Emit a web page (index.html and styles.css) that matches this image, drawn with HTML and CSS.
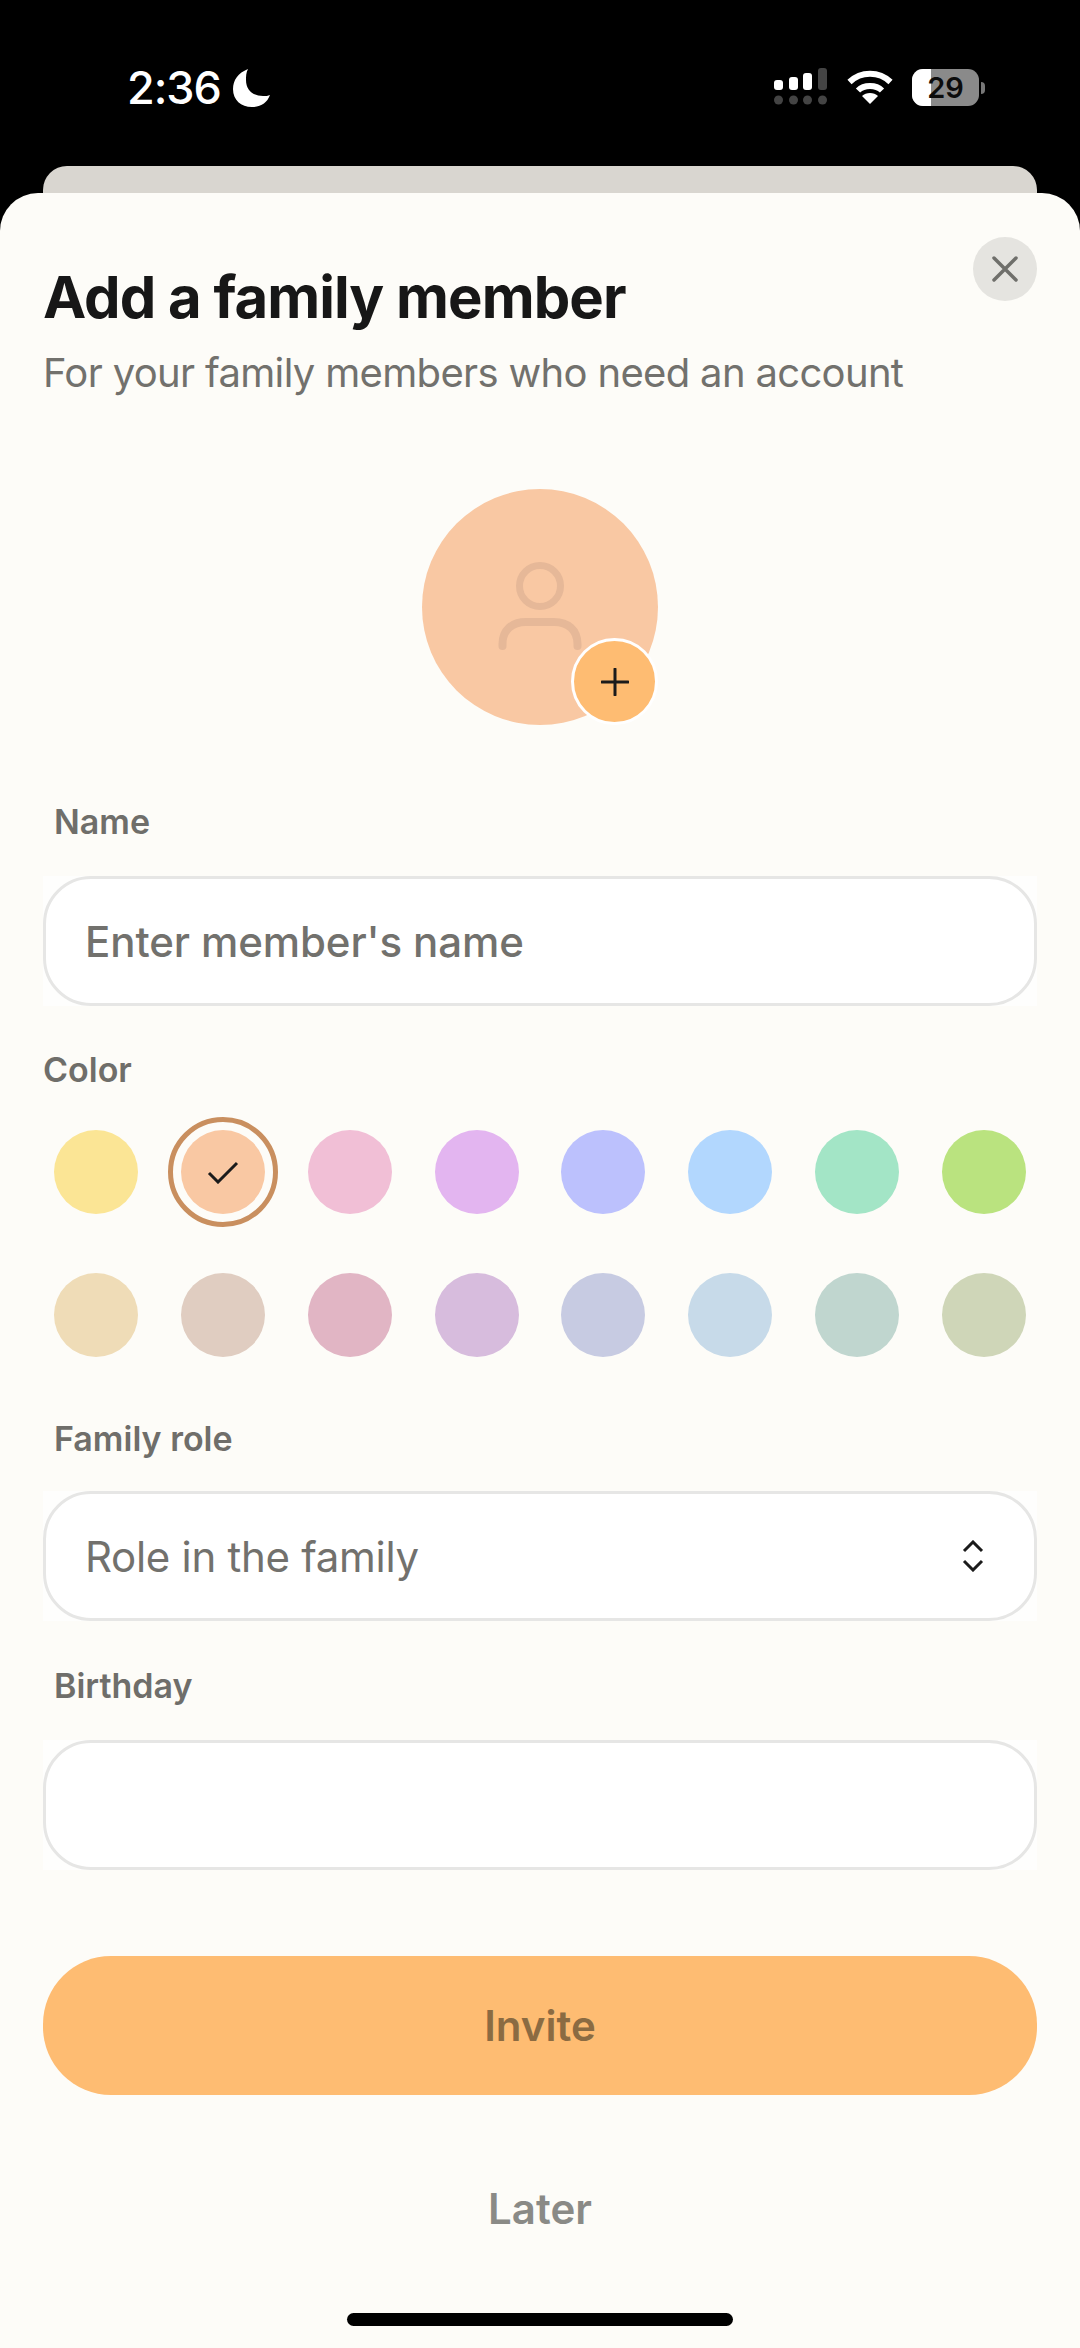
FILE: index.html
```html
<!DOCTYPE html>
<html lang="en">
<head>
    <meta charset="UTF-8">
    <title>Add a family member</title>
    <link rel="stylesheet" href="styles.css">
</head>

<body>
<div class="status-bar">
    <div class="status-left">
        <span class="time">2:36</span>
        <svg class="moon" width="38" height="40" viewBox="0 0 38 40">
            <path d="M15 1 C5 5 0 12 0 21 C0 32 8 39 19 39 C28 39 34 35 37 27 C35 28 33 28 30 28 C20 28 13 22 13 12 C13 8 13 5 15 1 Z" fill="#fff"/>
        </svg>
    </div>
    <div class="status-right">
        <svg class="signal" width="54" height="39" viewBox="0 0 54 39">
            <rect x="0" y="12" width="9" height="10" rx="3" fill="#fff"/>
            <rect x="15" y="9" width="9" height="13" rx="3" fill="#fff"/>
            <rect x="29" y="5" width="9" height="17" rx="3" fill="#fff"/>
            <rect x="44" y="0" width="9" height="22" rx="3" fill="#444"/>
            <circle cx="4.5" cy="32" r="4.5" fill="#444"/>
            <circle cx="19.5" cy="32" r="4.5" fill="#444"/>
            <circle cx="33.5" cy="32" r="4.5" fill="#444"/>
            <circle cx="48.5" cy="32" r="4.5" fill="#444"/>
        </svg>
        <svg class="wifi" width="46" height="34" viewBox="0 0 46 34">
            <path d="M2.500 12 C14 1 32 1 43.500 12" fill="none" stroke="#fff" stroke-width="6"/>
            <path d="M11 20.500 C17 14.500 29 14.500 35 20.500" fill="none" stroke="#fff" stroke-width="6"/>
            <path d="M15 26 C19 22 27 22 31 26 L23 34 Z" fill="#fff"/>
        </svg>
        <div class="battery">
            <div class="battery-body">
                <div class="battery-fill"></div>
                <span class="battery-text">29</span>
            </div>
            <div class="battery-cap"></div>
        </div>
    </div>
</div>

<div class="back-card"></div>

<div class="sheet">
    <button class="close-btn">
        <svg width="26" height="26" viewBox="0 0 26 26">
            <path d="M2 2 L24 24 M24 2 L2 24" stroke="#6f6f6b" stroke-width="3.500" stroke-linecap="round"/>
        </svg>
    </button>

    <h1 class="title">Add a family member</h1>
    <p class="subtitle">For your family members who need an account</p>

    <div class="avatar-row">
        <div class="avatar">
            <svg width="84" height="90" viewBox="0 0 84 90">
                <circle cx="42" cy="24" r="20.500" fill="none" stroke="#e6b898" stroke-width="7"/>
                <path d="M4.500 84 V82 C4.500 68 14 60 28 60 H56 C70 60 79.500 68 79.500 82 V84" fill="none" stroke="#e6b898" stroke-width="8" stroke-linecap="round"/>
            </svg>
            <div class="avatar-add">
                <svg width="28" height="28" viewBox="0 0 28 28">
                    <path d="M14 1 V27 M1 14 H27" stroke="#1b1b1b" stroke-width="3" stroke-linecap="round"/>
                </svg>
            </div>
        </div>
    </div>

    <label class="label label-in">Name</label>
    <div class="field-wrap">
        <div class="field field-name">Enter member's name</div>
    </div>

    <label class="label label-color">Color</label>
    <div class="swatches">
        <div class="swatch c1"></div>
        <div class="swatch c2 selected">
            <svg width="32" height="24" viewBox="0 0 32 24">
                <path d="M2 13 L11 22 L30 3" fill="none" stroke="#1b1b1b" stroke-width="3"/>
            </svg>
        </div>
        <div class="swatch c3"></div>
        <div class="swatch c4"></div>
        <div class="swatch c5"></div>
        <div class="swatch c6"></div>
        <div class="swatch c7"></div>
        <div class="swatch c8"></div>
        <div class="swatch c9"></div>
        <div class="swatch c10"></div>
        <div class="swatch c11"></div>
        <div class="swatch c12"></div>
        <div class="swatch c13"></div>
        <div class="swatch c14"></div>
        <div class="swatch c15"></div>
        <div class="swatch c16"></div>
    </div>

    <label class="label label-in label-role">Family role</label>
    <div class="field-wrap">
        <div class="field field-select">
            <span>Role in the family</span>
            <svg width="22" height="32" viewBox="0 0 22 32">
                <path d="M2 11 L11 2 L20 11 M2 21 L11 30 L20 21" fill="none" stroke="#1b1b1b" stroke-width="3"/>
            </svg>
        </div>
    </div>

    <label class="label label-in">Birthday</label>
    <div class="field-wrap">
        <div class="field"></div>
    </div>

    <button class="invite-btn">Invite</button>
    <button class="later-btn">Later</button>

    <div class="home-bar"></div>
</div>
</body>
</html>
```

FILE: styles.css
```css
* {
    box-sizing: border-box;
}

html, body {
    margin: 0;
    padding: 0;
}

body {
    width: 1080px;
    height: 2348px;
    background-color: #000;
    font-family: "Inter", sans-serif;
    overflow: hidden;
}

.status-bar {
    height: 166px;
    padding: 65px 95px 0 127px;
    display: flex;
    justify-content: space-between;
    align-items: flex-start;
    color: #fff;
}

.status-left {
    display: flex;
    align-items: center;
    gap: 12px;
}

.time {
    font-size: 45px;
    line-height: 46px;
    font-weight: 500;
    letter-spacing: -1px;
}

.status-right {
    display: flex;
    align-items: flex-start;
    gap: 19px;
    padding-top: 3px;
}

.wifi {
    margin-top: 2px;
}

.battery {
    display: flex;
    align-items: center;
    gap: 2px;
    margin-top: 1px;
}

.battery-body {
    position: relative;
    width: 67px;
    height: 37px;
    border-radius: 11px;
    background-color: #8a8a8a;
    overflow: hidden;
    display: flex;
    align-items: center;
    justify-content: center;
}

.battery-fill {
    position: absolute;
    left: 0;
    top: 0;
    bottom: 0;
    width: 19px;
    background-color: #fff;
}

.battery-text {
    position: relative;
    color: #0c0c0c;
    font-size: 29px;
    font-weight: 600;
}

.battery-cap {
    width: 4px;
    height: 12px;
    background-color: #777;
    border-radius: 0 4px 4px 0;
}

.back-card {
    height: 40px;
    margin: 0 43px -13px;
    background-color: #d9d6d0;
    border-radius: 24px 24px 0 0;
}

.sheet {
    position: relative;
    height: 2155px;
    padding: 0 43px;
    background-color: #fdfcf8;
    border-radius: 38px 38px 0 0;
}

.close-btn {
    position: absolute;
    top: 44px;
    right: 43px;
    width: 64px;
    height: 64px;
    border: none;
    border-radius: 50%;
    background-color: #e5e4e0;
    display: flex;
    align-items: center;
    justify-content: center;
    padding: 0;
}

.title {
    margin: 0;
    padding-top: 69px;
    font-size: 58px;
    line-height: 70px;
    font-weight: 700;
    letter-spacing: -0.95px;
    color: #171717;
}

.subtitle {
    margin: 18px 0 0;
    font-size: 40px;
    line-height: 46px;
    font-weight: 400;
    letter-spacing: -0.67px;
    color: #72716d;
}

.avatar-row {
    display: flex;
    justify-content: center;
    margin-top: 93px;
}

.avatar {
    position: relative;
    width: 236px;
    height: 236px;
    border-radius: 50%;
    background-color: #f9c8a3;
    display: flex;
    align-items: center;
    justify-content: center;
}

.avatar-add {
    position: absolute;
    right: 0;
    bottom: 0;
    width: 87px;
    height: 87px;
    border-radius: 50%;
    background-color: #febc72;
    border: 3px solid #fff;
    display: flex;
    align-items: center;
    justify-content: center;
}

.label {
    display: block;
    font-size: 34px;
    line-height: 40px;
    font-weight: 600;
    color: #6f6e6a;
}

.label-in {
    margin: 48px 0 34px 11px;
}

.avatar-row + .label-in {
    margin-top: 77px;
}

.field-wrap + .label-in {
    margin-top: 45px;
}

.label-color {
    margin: 44px 0 34px;
}

.label-role.label-in {
    margin: 62px 0 32px 11px;
}

.field-wrap {
    height: 130px;
    background-color: #fefefd;
}

.field {
    height: 130px;
    padding: 0 39px;
    background-color: #fff;
    border: 3px solid #e6e6e5;
    border-radius: 48px;
    display: flex;
    align-items: center;
    font-size: 42px;
    letter-spacing: -0.3px;
    color: #72716d;
}

.field-name {
    font-weight: 500;
    letter-spacing: -0.1px;
}

.field-select {
    justify-content: space-between;
}

.field-select svg {
    margin-right: 11px;
}

.swatches {
    display: grid;
    grid-template-columns: repeat(8, 84px);
    justify-content: space-between;
    row-gap: 59px;
    padding: 0 11px;
    margin-top: 40px;
}

.swatch {
    position: relative;
    width: 84px;
    height: 84px;
    border-radius: 50%;
    display: flex;
    align-items: center;
    justify-content: center;
}

.swatch.selected::after {
    content: "";
    position: absolute;
    inset: -13px;
    border: 5px solid #c98f5f;
    border-radius: 50%;
}

.c1 { background-color: #fbe595; }
.c2 { background-color: #f9c8a3; }
.c3 { background-color: #f1bfd6; }
.c4 { background-color: #e3b5f0; }
.c5 { background-color: #bcc1fd; }
.c6 { background-color: #b2d7fe; }
.c7 { background-color: #a3e5c6; }
.c8 { background-color: #bae37f; }
.c9 { background-color: #efdcb7; }
.c10 { background-color: #e0cdc1; }
.c11 { background-color: #e1b5c4; }
.c12 { background-color: #d7bcdd; }
.c13 { background-color: #c7cbe2; }
.c14 { background-color: #c7dae9; }
.c15 { background-color: #c0d6cf; }
.c16 { background-color: #cfd6b8; }

.invite-btn {
    display: block;
    width: 100%;
    height: 139px;
    margin-top: 86px;
    border: none;
    border-radius: 68px;
    background-color: #febc72;
    color: #8b6b42;
    font-family: inherit;
    font-size: 42px;
    font-weight: 600;
}

.later-btn {
    display: block;
    width: 100%;
    height: 50px;
    margin-top: 87px;
    border: none;
    background: none;
    color: #8a8a86;
    font-family: inherit;
    font-size: 42px;
    font-weight: 600;
}

.home-bar {
    position: absolute;
    left: 347px;
    top: 2120px;
    width: 386px;
    height: 13px;
    border-radius: 7px;
    background-color: #000;
}
```
